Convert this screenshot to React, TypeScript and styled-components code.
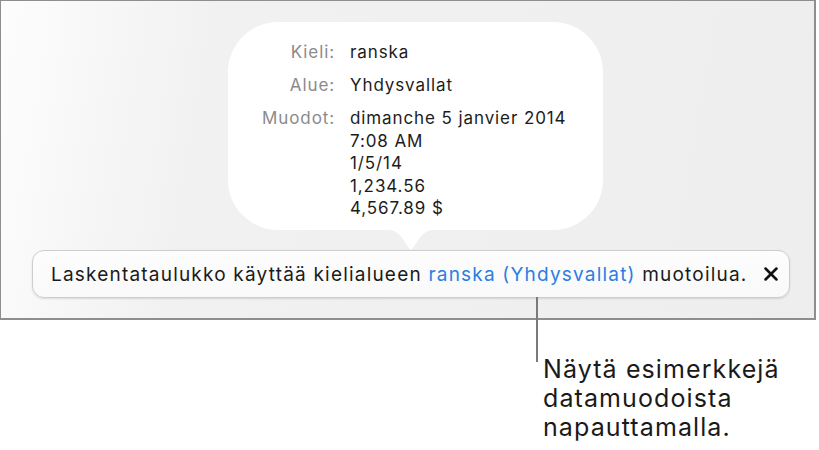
import React from 'react';
import styled, {createGlobalStyle} from 'styled-components';
import {X} from 'lucide-react';

const GlobalStyle = createGlobalStyle`
  html, body {
    margin: 0;
    padding: 0;
    background: #ffffff;
  }

  body {
    width: 819px;
    height: 450px;
    overflow: hidden;
    font-family: Inter, "Noto Sans", "Liberation Sans", sans-serif;
    color: #1c1c1c;
  }
`

const formats = ['dimanche 5 janvier 2014', '7:08 AM', '1/5/14', '1,234.56', '4,567.89 $'];

export default function App() {
    return (
        <>
            <GlobalStyle/>
            <Page>
                <Frame>
                    <Bubble>
                        <InfoGrid>
                            <Label>Kieli:</Label>
                            <Value>ranska</Value>
                            <Label>Alue:</Label>
                            <Value>Yhdysvallat</Value>
                            <Label>Muodot:</Label>
                            <Value>
                                {formats.map(f => <div key={f}>{f}</div>)}
                            </Value>
                        </InfoGrid>
                        <Tail viewBox="0 0 44 20" aria-hidden>
                            <path d="M0 0 C12 0 17 16 22 20 C27 16 32 0 44 0 Z" fill="#ffffff"/>
                        </Tail>
                    </Bubble>
                    <Banner>
                        <BannerText>
                            Laskentataulukko käyttää kielialueen <Link>ranska (Yhdysvallat)</Link> muotoilua.
                        </BannerText>
                        <CloseButton aria-label="Sulje">
                            <X size={22} strokeWidth={2.8} color="#111"/>
                        </CloseButton>
                        <CalloutLine/>
                    </Banner>
                </Frame>
                <Callout>
                    Näytä esimerkkejä<br/>
                    datamuodoista<br/>
                    napauttamalla.
                </Callout>
            </Page>
        </>
    );
}

const Page = styled.div`
  display: flex;
  flex-direction: column;
  width: 819px;
  height: 450px;
`

const Frame = styled.div`
  box-sizing: border-box;
  width: 816px;
  height: 320px;
  border: 1px solid #8e8e8e;
  border-bottom-width: 2px;
  border-right-width: 2px;
  background: linear-gradient(100deg, #fdfdfd 0%, #f1f1f1 25%, #eeeeee 100%);
  display: flex;
  flex-direction: column;
  align-items: flex-start;
  padding-top: 21px;
`

const Bubble = styled.div`
  position: relative;
  box-sizing: border-box;
  width: 375px;
  height: 208px;
  margin-left: 227px;
  background: #ffffff;
  border-radius: 50px;
  padding-top: 19px;
`

const InfoGrid = styled.div`
  display: grid;
  grid-template-columns: 107px auto;
  column-gap: 15px;
  row-gap: 10.5px;
  font-size: 17px;
  line-height: 22.5px;
  letter-spacing: 0.9px;
`

const Label = styled.div`
  text-align: right;
  color: #8b8b8b;
`

const Value = styled.div`
  color: #1c1c1c;
`

const Tail = styled.svg`
  position: absolute;
  left: 161px;
  bottom: -20px;
  width: 44px;
  height: 20px;
`

const Banner = styled.div`
  position: relative;
  box-sizing: border-box;
  display: flex;
  align-items: center;
  gap: 12px;
  width: 758px;
  height: 48px;
  margin-top: 20px;
  margin-left: 31px;
  padding: 0 14px 0 18px;
  background: linear-gradient(#fdfdfd, #f9f9f9);
  border: 1px solid #cdcdcd;
  border-radius: 12px;
  box-shadow: 0 1px 2px rgba(0, 0, 0, 0.12);
`

const BannerText = styled.span`
  font-size: 19px;
  letter-spacing: 1.2px;
  color: #1a1a1a;
  white-space: nowrap;
`

const Link = styled.span`
  color: #2a7ee3;
`

const CloseButton = styled.span`
  display: flex;
  align-items: center;
`

const CalloutLine = styled.div`
  position: absolute;
  left: 503px;
  top: 100%;
  width: 2px;
  height: 65px;
  background: #7a7a7a;
`

const Callout = styled.div`
  margin: 35px 0 0 543px;
  font-size: 25px;
  line-height: 29px;
  letter-spacing: 1.1px;
  color: #1a1a1a;
`
